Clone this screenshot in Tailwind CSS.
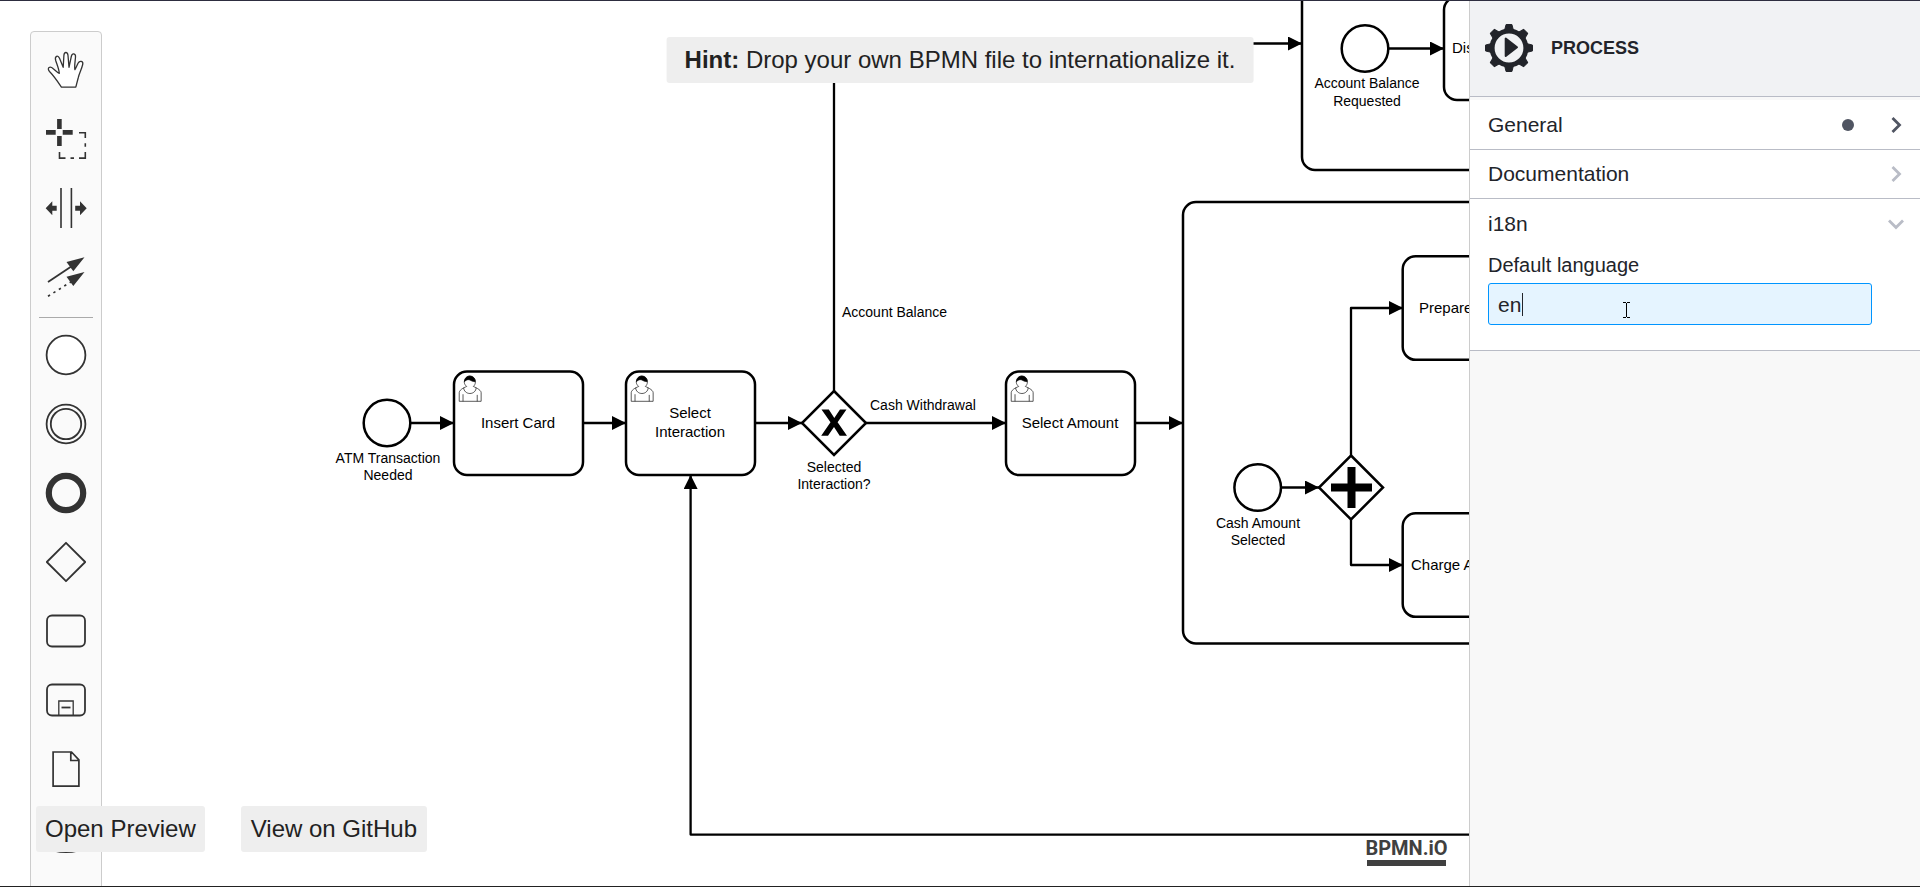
<!DOCTYPE html>
<html lang="en">
<head>
<meta charset="utf-8">
<meta name="viewport" content="width=device-width, initial-scale=1">
<title>BPMN i18n modeler</title>
<script src="https://cdn.jsdelivr.net/npm/@tailwindcss/browser@4"></script>
</head>
<body class="bg-white font-['Liberation_Sans',Arial,sans-serif] text-[#222222]">
<div class="relative flex h-screen overflow-hidden">

  <main class="relative min-w-0 flex-1 overflow-hidden">
    <!-- Diagram canvas -->
    <svg class="absolute inset-0 h-full w-full" role="img" aria-label="ATM process diagram">
      <defs>
        <marker id="arrow" viewBox="0 0 14 14" refX="14" refY="7" markerWidth="14" markerHeight="14" markerUnits="userSpaceOnUse" orient="auto">
          <path d="M0 0 L14 7 L0 14 Z"/>
        </marker>
        <g id="user">
          <path fill="#fff" stroke="#000" stroke-width=".5" d="m 15,12 c 0.909,-0.845 1.594,-2.049 1.594,-3.385 0,-2.554 -1.805,-4.622 -4.357,-4.622 -2.552,0 -4.288,2.068 -4.288,4.622 0,1.348 0.974,2.562 1.896,3.405 -0.529,0.187 -5.669,2.097 -5.794,4.756 v 6.718 h 17 v -6.718 c 0,-2.298 -5.528,-4.595 -6.051,-4.776 z m -8,6 l 0,5.5 m 11,0 l 0,-5"/>
          <path fill="none" stroke="#000" stroke-width=".5" d="m 15,12 m 2.162,1.009 c 0,2.447 -2.158,4.431 -4.821,4.431 -2.664,0 -4.822,-1.981 -4.822,-4.431"/>
          <path stroke="#000" stroke-width=".5" d="m 15,12 m -6.9,-3.8 c 0,0 2.251,-2.358 4.274,-1.177 2.024,1.181 4.221,1.537 4.124,0.965 -0.098,-0.57 -0.117,-3.791 -4.191,-4.136 -3.572,0.001 -4.208,3.672 -4.207,4.348 z"/>
        </g>
      </defs>

      <!-- Shapes -->
      <g fill="#fff" stroke="#000" stroke-width="2.5">
        <rect x="1302" y="-60" width="400" height="230" rx="13"/>
        <rect x="1183" y="202" width="500" height="441.5" rx="13"/>
        <circle cx="387" cy="423" r="23.3"/>
        <rect x="454" y="371.5" width="129" height="103.5" rx="13"/>
        <rect x="626" y="371.5" width="129" height="103.5" rx="13"/>
        <path d="M834 391 L866 423 L834 455 L802 423 Z"/>
        <rect x="1006" y="371.5" width="129" height="103.5" rx="13"/>
        <circle cx="1365" cy="48.5" r="23.3"/>
        <rect x="1444" y="-3" width="129" height="103" rx="13"/>
        <circle cx="1257.7" cy="487.5" r="23.3"/>
        <path d="M1351 455.5 L1383 487.5 L1351 519.5 L1319 487.5 Z"/>
        <rect x="1402.7" y="256.3" width="129" height="103.5" rx="13"/>
        <rect x="1402.7" y="513.3" width="129" height="103.5" rx="13"/>
      </g>

      <!-- Sequence flows -->
      <g fill="none" stroke="#000" stroke-width="2.3" stroke-linejoin="round">
        <path marker-end="url(#arrow)" d="M411 423 H454"/>
        <path marker-end="url(#arrow)" d="M584 423 H626"/>
        <path marker-end="url(#arrow)" d="M756 423 H802"/>
        <path marker-end="url(#arrow)" d="M834 391 V43.5 H1302"/>
        <path marker-end="url(#arrow)" d="M866 423 H1006"/>
        <path marker-end="url(#arrow)" d="M1135 423 H1183"/>
        <path marker-end="url(#arrow)" d="M1281 487.5 H1319"/>
        <path marker-end="url(#arrow)" d="M1351 455.5 V308 H1403"/>
        <path marker-end="url(#arrow)" d="M1351 519.5 V565 H1403"/>
        <path marker-end="url(#arrow)" d="M1389 48.5 H1444"/>
        <path marker-end="url(#arrow)" d="M1700 834.6 H690.6 V475"/>
      </g>

      <!-- Gateway and task markers -->
      <path d="M821.5 409.500 H828.8 L834.3 418 L840 409.500 H846.500 L837.6 422.3 L847 435.7 H839.700 L834 426.9 L828 435.7 H821.2 L830.5 422.3 Z"/>
      <path d="M1347.5 467 h8 v16.5 h16.5 v8 h-16.5 v16.5 h-8 v-16.5 h-16.5 v-8 h16.5 Z"/>
      <use href="#user" transform="translate(454 371) scale(1.29)"/>
      <use href="#user" transform="translate(626 371) scale(1.29)"/>
      <use href="#user" transform="translate(1006 371) scale(1.29)"/>

      <!-- Task names -->
      <g class="text-[15px]" fill="#000">
        <text x="518" y="428" text-anchor="middle">Insert Card</text>
        <text text-anchor="middle"><tspan x="690" y="418">Select</tspan><tspan x="690" y="437">Interaction</tspan></text>
        <text x="1070" y="428" text-anchor="middle">Select Amount</text>
        <text x="1452" y="53">Disclose</text>
        <text x="1419" y="313">Prepare</text>
        <text x="1411" y="570">Charge Account</text>
      </g>

      <!-- External labels -->
      <g class="text-[14px]" fill="#000">
        <text text-anchor="middle"><tspan x="388" y="463">ATM Transaction</tspan><tspan x="388" y="480">Needed</tspan></text>
        <text x="842" y="317">Account Balance</text>
        <text x="870" y="410">Cash Withdrawal</text>
        <text text-anchor="middle"><tspan x="834" y="472">Selected</tspan><tspan x="834" y="489">Interaction?</tspan></text>
        <text text-anchor="middle"><tspan x="1367" y="88">Account Balance</tspan><tspan x="1367" y="106">Requested</tspan></text>
        <text text-anchor="middle"><tspan x="1258" y="528">Cash Amount</tspan><tspan x="1258" y="545">Selected</tspan></text>
      </g>
    </svg>

    <!-- Tool palette -->
    <div role="toolbar" aria-label="Tools" class="absolute top-[31px] left-[30px] flex w-[72px] flex-col items-stretch rounded-sm border border-[#cccccc] bg-[#fafafa] pt-[3px] pb-1 text-[#333333]">
      <button aria-label="Hand tool" class="flex h-[69px] items-center justify-center">
        <svg class="size-[42px]" viewBox="-21 -21 42 42" fill="#fff" stroke="currentColor" stroke-width="1.3" stroke-linejoin="round"><path d="M-4.5 17.2 C-8 12 -12 6 -16.5 1.5 C-19.5 -2 -16 -4.5 -13 -1.5 C-11 0 -9 2.5 -6.7 3.3 C-7 -1 -9 -5.5 -10.3 -9.5 C-11.6 -14 -8 -15.5 -6.4 -11.5 L-2.8 -2.7 L-2.1 -14.5 C-1.8 -18.5 1.6 -18.5 2 -14.5 L3 -2.7 L5.3 -13.5 C6.2 -17.5 9.8 -16.7 9.5 -13 C9.2 -8.5 8.2 -4 8.9 -.3 C10 -2 11 -4.5 12 -6.7 C13.8 -10 17.5 -8.8 16.7 -5.5 C15.5 -.5 13.3 3 12.3 7.5 L9.8 17.2 Z"/></svg>
      </button>
      <button aria-label="Lasso tool" class="flex h-[69px] items-center justify-center">
        <svg class="size-[42px]" viewBox="-21 -21 42 42" fill="none" stroke="currentColor"><path stroke-width="4.6" d="M-6.6 -20 V-10 M-6.6 -3 V7 M-20 -6.6 H-10.3 M-3.3 -6.6 H6.7"/><path stroke-width="1.6" d="M13 -6.3 H19.3 V-1 M19.3 4.3 V7.7 M19.3 13 V19.1 H13 M8 19.1 H4.5 M-.5 19.1 H-6.5 V13"/></svg>
      </button>
      <button aria-label="Space tool" class="flex h-[69px] items-center justify-center">
        <svg class="size-[42px]" viewBox="-21 -21 42 42" fill="currentColor"><path d="M-5.8 -20 h1.6 v40 h-1.6 Z M4.6 -20 h1.6 v40 h-1.6 Z M-20.3 .3 L-13.7 -6.7 V-2.2 H-9.3 V2.8 H-13.7 V7.3 Z M20.7 .3 L14 -6.7 V-2.2 H9.2 V2.8 H14 V7.3 Z"/></svg>
      </button>
      <button aria-label="Connect tool" class="flex h-[69px] items-center justify-center">
        <svg class="size-[42px]" viewBox="-21 -21 42 42" fill="currentColor" stroke="currentColor"><path stroke-width="1.7" d="M-18 5 L6 -11"/><path stroke-width="1.7" stroke-dasharray="2.4 4" d="M-18 19.3 L6 4.2"/><path stroke="none" d="M18.5 -19.7 L.5 -15 L7.3 -5.7 Z M18.5 -5 L.5 -.3 L7.3 9 Z"/></svg>
      </button>
      <hr class="mx-2 mt-[6px] mb-[2px] border-t border-[#aaaaaa]">
      <button aria-label="Create start event" class="flex h-[69px] items-center justify-center">
        <svg class="size-[42px]" viewBox="-21 -21 42 42" fill="#fff" stroke="currentColor" stroke-width="1.8"><circle r="19.4"/></svg>
      </button>
      <button aria-label="Create intermediate event" class="flex h-[69px] items-center justify-center">
        <svg class="size-[42px]" viewBox="-21 -21 42 42" fill="none" stroke="currentColor" stroke-width="1.8"><circle r="19.4"/><circle r="15.2"/></svg>
      </button>
      <button aria-label="Create end event" class="flex h-[69px] items-center justify-center">
        <svg class="size-[42px]" viewBox="-21 -21 42 42" fill="none" stroke="currentColor" stroke-width="6.2"><circle r="17.2"/></svg>
      </button>
      <button aria-label="Create gateway" class="flex h-[69px] items-center justify-center">
        <svg class="size-[42px]" viewBox="-21 -21 42 42" fill="none" stroke="currentColor" stroke-width="1.8" stroke-linejoin="round"><path d="M0 -19.2 L19.2 0 L0 19.2 L-19.2 0 Z"/></svg>
      </button>
      <button aria-label="Create task" class="flex h-[69px] items-center justify-center">
        <svg class="size-[42px]" viewBox="-21 -21 42 42" fill="none" stroke="currentColor" stroke-width="1.8"><rect x="-19" y="-15.5" width="38" height="31" rx="5"/></svg>
      </button>
      <button aria-label="Create expanded sub-process" class="flex h-[69px] items-center justify-center">
        <svg class="size-[42px]" viewBox="-21 -21 42 42" fill="none" stroke="currentColor" stroke-width="1.8"><rect x="-19" y="-15.5" width="38" height="31" rx="5"/><path stroke-width="1.3" d="M-7.2 15 V1 H7.2 V15"/><path d="M-4.5 7.5 H4.5"/></svg>
      </button>
      <button aria-label="Create data object reference" class="flex h-[69px] items-center justify-center">
        <svg class="size-[42px]" viewBox="-21 -21 42 42" fill="none" stroke="currentColor" stroke-width="1.7"><path d="M-12.9 -17 H5.5 L12.9 -9.2 V17.2 H-12.9 Z M4.8 -17 V-8.5 H12.9"/></svg>
      </button>
      <button aria-label="Create data store reference" class="flex h-[69px] items-center justify-center">
        <svg class="size-[42px]" viewBox="-21 -21 42 42" fill="none" stroke="currentColor" stroke-width="1.8"><path d="M-16 -10 C-16 -16 16 -16 16 -10 V9 C16 15.7 -16 15.7 -16 9 Z M-16 -10 C-16 -4 16 -4 16 -10"/></svg>
      </button>
      <button aria-label="Create pool" class="flex h-[69px] items-center justify-center">
        <svg class="size-[42px]" viewBox="-21 -21 42 42" fill="none" stroke="currentColor" stroke-width="1.8"><path d="M-19 -12 H19 V12 H-19 Z M-12 -12 V12"/></svg>
      </button>
    </div>

    <!-- Canvas actions -->
    <nav class="absolute bottom-[35px] left-9 flex gap-9 text-2xl">
      <a href="#preview" class="rounded-[3px] bg-[#eeeeee] px-[9px] py-[7px]">Open Preview</a>
      <a href="#github" class="rounded-[3px] bg-[#eeeeee] px-[10px] py-[7px]">View on GitHub</a>
    </nav>

    <!-- bpmn.io mark -->
    <a href="#bpmn-io" class="absolute right-[23px] bottom-[21px] flex w-[79px] flex-col items-center font-[Roboto,'Liberation_Sans',sans-serif] text-xl leading-6 font-bold text-[#404040]">BPMN.iO<span class="h-[6px] w-full bg-[#404040]"></span></a>
  </main>

  <!-- Properties panel -->
  <aside class="flex w-[451px] shrink-0 flex-col border-l border-[#cccccc] bg-[#f8f8f8] text-[21px] leading-6 text-[#22242a]">
    <header class="mb-[3px] flex h-[97px] items-center gap-[18px] border-b border-[#b9bcc6] bg-[#f1f2f4] pl-[15px]">
      <svg class="size-12" viewBox="-24 -24 48 48" fill="currentColor" aria-hidden="true">
        <defs><path id="tooth" stroke="currentColor" stroke-linejoin="round" d="M-2.900 -23.500 H2.900 L4.600 -17 H-4.600 Z"/></defs>
        <circle r="16.9" fill="none" stroke="currentColor" stroke-width="5"/>
        <use href="#tooth"/><use href="#tooth" transform="rotate(45)"/><use href="#tooth" transform="rotate(90)"/><use href="#tooth" transform="rotate(135)"/>
        <use href="#tooth" transform="rotate(180)"/><use href="#tooth" transform="rotate(225)"/><use href="#tooth" transform="rotate(270)"/><use href="#tooth" transform="rotate(315)"/>
        <path stroke="currentColor" stroke-width="2" stroke-linejoin="round" d="M-3.300 -9.500 V8 L8 -.7 Z"/>
      </svg>
      <h1 class="text-lg font-bold">PROCESS</h1>
    </header>

    <button class="flex h-[50px] items-center border-b border-[#b9bcc6] bg-white pr-4 pl-[18px] text-left">
      <span class="flex-1">General</span>
      <span class="mr-[34px] size-3 rounded-full bg-[#505562]"></span>
      <svg class="size-4" viewBox="0 0 16 16" fill="none" stroke="#505562" stroke-width="2.8"><path d="M4.5 1 L11.500 8 L4.500 15"/></svg>
    </button>
    <button class="flex h-[49px] items-center border-b border-[#b9bcc6] bg-white pr-4 pl-[18px] text-left">
      <span class="flex-1">Documentation</span>
      <svg class="size-4" viewBox="0 0 16 16" fill="none" stroke="#b9bcc6" stroke-width="2.8"><path d="M4.500 1 L11.500 8 L4.500 15"/></svg>
    </button>
    <section class="border-b border-[#b9bcc6] bg-white pb-[25px]">
      <button class="flex h-[49px] w-full items-center pr-4 pl-[18px] text-left" aria-expanded="true">
        <span class="flex-1">i18n</span>
        <svg class="size-4" viewBox="0 0 16 16" fill="none" stroke="#b9bcc6" stroke-width="2.8"><path d="M1 4.500 L8 11.500 L15 4.500"/></svg>
      </button>
      <div class="relative flex flex-col gap-[6px] pt-[5px] pr-12 pl-[18px]">
        <label for="language" class="text-xl leading-6">Default language</label>
        <input id="language" type="text" value="en" class="h-[42px] w-full rounded-[3px] border border-[#0095ff] bg-[#e5f4ff] px-[9px] pt-px outline-none">
        <!-- Text caret and pointer -->
        <span class="absolute bottom-[9px] left-[52px] h-[23px] w-px bg-[#22242a]"></span>
        <svg class="absolute bottom-[6px] left-[152px] h-[18px] w-[9px]" viewBox="0 0 9 18" fill="none" stroke="#000" aria-hidden="true"><path d="M1 1.500 H4 M5 1.500 H8 M4.500 2 V16 M1 16.500 H4 M5 16.500 H8"/></svg>
      </div>
    </section>
  </aside>

  <!-- Hint -->
  <p class="absolute top-[37px] left-1/2 -translate-x-1/2 rounded-[3px] bg-[#eeeeee] px-[18px] py-[7px] text-2xl whitespace-nowrap"><strong>Hint:</strong> Drop your own BPMN file to internationalize it.</p>

  <div class="pointer-events-none absolute inset-0 border-t border-b border-t-[#2d2d3f] border-b-[#222222]"></div>
</div>
</body>
</html>
